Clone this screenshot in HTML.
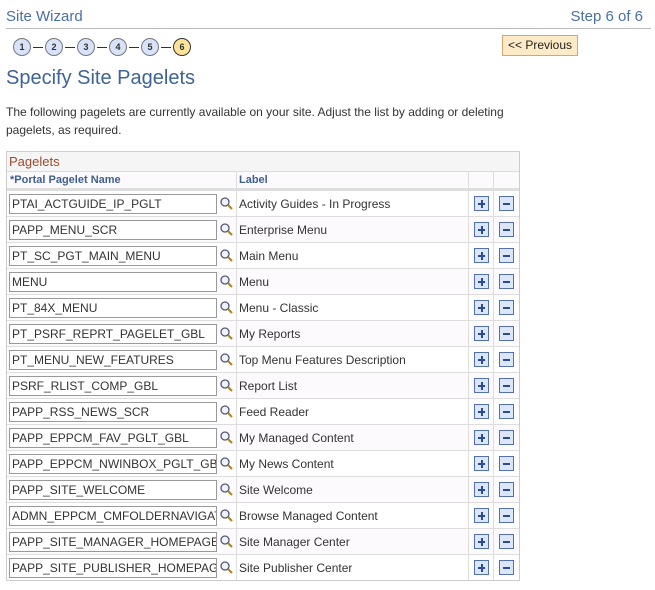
<!DOCTYPE html>
<html><head><style>
body{margin:0;width:655px;height:590px;background:#fff;font-family:"Liberation Sans",Arial,sans-serif;position:relative;overflow:hidden}
.a{position:absolute}
.step{position:absolute;top:38px;width:16px;height:16px;border:1px solid #777;border-radius:50%;background:#d8e2f8;font-size:9px;font-weight:bold;text-align:center;line-height:16px;color:#333}
.ln{position:absolute;top:47px;height:1px;width:10px;background:#333}
.tb{position:absolute;left:6px;top:151px;width:512px;height:428px;border:1px solid #ccc;font-size:12px;color:#333}
.row{position:absolute;left:0;width:512px;height:25px;border-top:1px solid #ddd}
.c{position:absolute;top:1px;height:25px;line-height:25px;white-space:nowrap;overflow:hidden}
.vl{position:absolute;top:19px;bottom:0;width:1px;background:#ddd}
.in{position:absolute;left:2px;top:3px;width:208px;height:20px;border:1px solid #999;box-sizing:border-box;padding-left:2px;font-size:12px;line-height:18px;color:#333;overflow:hidden;white-space:nowrap;background:#fff}
.btn{position:absolute;top:5px;width:13px;height:13px;border:1px solid #5370b5;background:#dbe6f8}
.btn:before{content:"";position:absolute;left:3px;top:5.5px;width:7px;height:2px;background:#2a4b9a}
.p:after{content:"";position:absolute;left:5.5px;top:3px;width:2px;height:8px;background:#2a4b9a}
.mg{position:absolute;left:213px;top:6px;width:13px;height:13px}
</style></head><body>
<div class="a" style="left:6px;top:8px;font-size:15px;color:#4a6fa5">Site Wizard</div>
<div class="a" style="right:12px;top:8px;font-size:15px;color:#4a6fa5">Step 6 of 6</div>
<div class="a" style="left:6px;top:28px;width:645px;height:1px;background:#bbb"></div>
<div class="step" style="left:13px">1</div><div class="ln" style="left:33px"></div>
<div class="step" style="left:45px">2</div><div class="ln" style="left:65px"></div>
<div class="step" style="left:77px">3</div><div class="ln" style="left:97px"></div>
<div class="step" style="left:109px">4</div><div class="ln" style="left:129px"></div>
<div class="step" style="left:141px">5</div><div class="ln" style="left:161px"></div>
<div class="step" style="left:173px;background:#fde39a;border-color:#333">6</div>
<div class="a" style="left:502px;top:35px;width:74px;height:19px;border:1px solid #d9a36b;background:#fdebc8;font-size:12px;line-height:19px;text-align:center;color:#222">&lt;&lt; Previous</div>
<div class="a" style="left:6px;top:67px;font-size:20px;color:#3e6397">Specify Site Pagelets</div>
<div class="a" style="left:6px;top:103px;width:520px;font-size:12px;line-height:18px;color:#333">The following pagelets are currently available on your site. Adjust the list by adding or deleting pagelets, as required.</div>
<div class="tb" id="tb">
<div class="a" style="left:0;top:0;width:512px;height:19px;background:#f5f5f5;color:#9a4b2a;font-size:13px;line-height:19px;padding-left:2px;box-sizing:border-box">Pagelets</div>
<div class="a" style="left:0;top:19px;width:512px;height:16px;background:#fdfafd;border-top:1px solid #ddd;border-bottom:2px solid #ddd;font-weight:bold;color:#3e5f8f;font-size:11px;line-height:17px"><span class="a" style="left:3px">*Portal Pagelet Name</span><span class="a" style="left:232px">Label</span></div>
</div>
<script>
var d=[["PTAI_ACTGUIDE_IP_PGLT","Activity Guides - In Progress"],["PAPP_MENU_SCR","Enterprise Menu"],["PT_SC_PGT_MAIN_MENU","Main Menu"],["MENU","Menu"],["PT_84X_MENU","Menu - Classic"],["PT_PSRF_REPRT_PAGELET_GBL","My Reports"],["PT_MENU_NEW_FEATURES","Top Menu Features Description"],["PSRF_RLIST_COMP_GBL","Report List"],["PAPP_RSS_NEWS_SCR","Feed Reader"],["PAPP_EPPCM_FAV_PGLT_GBL","My Managed Content"],["PAPP_EPPCM_NWINBOX_PGLT_GBL","My News Content"],["PAPP_SITE_WELCOME","Site Welcome"],["ADMN_EPPCM_CMFOLDERNAVIGATION","Browse Managed Content"],["PAPP_SITE_MANAGER_HOMEPAGE","Site Manager Center"],["PAPP_SITE_PUBLISHER_HOMEPAGE","Site Publisher Center"]];
var mg='<svg class="mg" viewBox="0 0 13 13"><circle cx="5" cy="5" r="4" fill="#eef4fb" stroke="#557" stroke-width="1.3"/><line x1="8" y1="8" x2="12" y2="12" stroke="#a8882a" stroke-width="2.2"/></svg>';
var h="";d.forEach(function(r,i){var t=38+i*26;h+='<div class="row" style="top:'+t+'px;background:'+(i%2?'#fdfafd':'#fff')+'"><span class="in">'+r[0]+'</span>'+mg+'<span class="c" style="left:232px">'+r[1]+'</span><span class="btn p" style="left:467px"></span><span class="btn" style="left:492px"></span></div>'});
h+='<div class="vl" style="left:229px"></div><div class="vl" style="left:461px"></div><div class="vl" style="left:486px"></div>';
document.getElementById("tb").insertAdjacentHTML("beforeend",h);
</script>
</body></html>
